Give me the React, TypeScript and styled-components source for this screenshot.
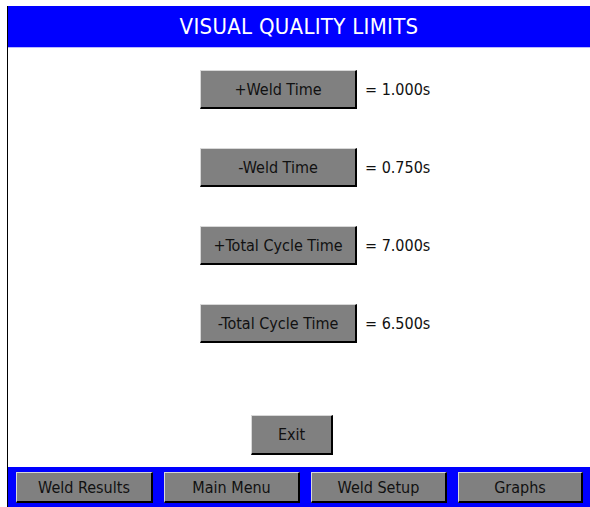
import styled, { createGlobalStyle } from "styled-components";

const GlobalStyle = createGlobalStyle`
  html, body {
    margin: 0;
    padding: 0;
    background: #ffffff;
    overflow: hidden;
  }
  body {
    font-family: "DejaVu Sans Condensed", "Liberation Sans", sans-serif;
  }
`;

const Page = styled.div`
  padding: 6px 0 0 7px;
  width: 590px;
  height: 507px;
  box-sizing: border-box;
`;

const Screen = styled.div`
  display: flex;
  flex-direction: column;
  width: 583px;
  height: 501px;
  border-left: 1px solid #000000;
  box-sizing: border-box;
`;

const Header = styled.div`
  display: flex;
  align-items: center;
  justify-content: center;
  height: 41px;
  background: #0000ff;
  color: #ffffff;
  font-size: 22px;
  letter-spacing: 0.3px;
  border-bottom: 1px solid #b8b8ff;
`;

const Body = styled.div`
  flex: 1;
  display: flex;
  flex-direction: column;
  background: #ffffff;
  padding: 22px 0 0 192px;
`;

const Rows = styled.div`
  display: flex;
  flex-direction: column;
  gap: 39px;
`;

const Row = styled.div`
  display: flex;
  align-items: center;
  gap: 8px;
`;

const PanelButton = styled.button<{ $w: number; $h: number }>`
  width: ${(p) => p.$w}px;
  height: ${(p) => p.$h}px;
  padding: 0;
  background: #808080;
  color: #111111;
  font-family: inherit;
  font-size: 16px;
  border-top: 1px solid #d8d8d8;
  border-left: 1px solid #d8d8d8;
  border-right: 2px solid #000000;
  border-bottom: 2px solid #000000;
  box-sizing: border-box;
  cursor: pointer;
`;

const Value = styled.span`
  font-size: 16px;
  color: #111111;
`;

const ExitWrap = styled.div`
  margin-top: auto;
  margin-bottom: 12px;
  padding-left: 51px;
`;

const Footer = styled.div`
  display: flex;
  gap: 11px;
  height: 40px;
  padding: 5px 0 0 8px;
  box-sizing: border-box;
  background: #0000ff;
`;

const limits = [
  { label: "+Weld Time", value: "= 1.000s" },
  { label: "-Weld Time", value: "= 0.750s" },
  { label: "+Total Cycle Time", value: "= 7.000s" },
  { label: "-Total Cycle Time", value: "= 6.500s" },
];

const tabs = [
  { label: "Weld Results", w: 137 },
  { label: "Main Menu", w: 136 },
  { label: "Weld Setup", w: 136 },
  { label: "Graphs", w: 125 },
];

export default function App() {
  return (
    <Page>
      <GlobalStyle />
      <Screen>
        <Header>VISUAL QUALITY LIMITS</Header>
        <Body>
          <Rows>
            {limits.map((l) => (
              <Row key={l.label}>
                <PanelButton $w={157} $h={39}>{l.label}</PanelButton>
                <Value>{l.value}</Value>
              </Row>
            ))}
          </Rows>
          <ExitWrap>
            <PanelButton $w={82} $h={40}>Exit</PanelButton>
          </ExitWrap>
        </Body>
        <Footer>
          {tabs.map((t) => (
            <PanelButton key={t.label} $w={t.w} $h={31}>{t.label}</PanelButton>
          ))}
        </Footer>
      </Screen>
    </Page>
  );
}
